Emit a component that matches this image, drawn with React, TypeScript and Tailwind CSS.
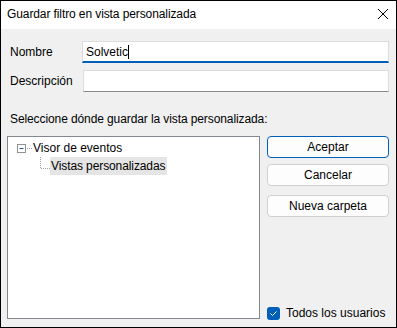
import React from 'react';

const font = { fontFamily: '"Segoe UI", "Liberation Sans", Arial, sans-serif' };

export default function App() {
  return (
    <div className="w-[397px] h-[328px] border border-black bg-[#f0f0f0] flex flex-col text-[12px] text-black" style={font}>
      {/* title bar */}
      <div className="h-[28px] bg-white flex items-center justify-between pl-[6px] pr-[6px] shrink-0">
        <span className="pb-[3px] tracking-[-0.1px]">Guardar filtro en vista personalizada</span>
        <svg width="12" height="12" viewBox="0 0 12 12" className="mr-[1px] mb-[3px]">
          <path d="M1 1 L11 11 M11 1 L1 11" stroke="#000" strokeWidth="1" />
        </svg>
      </div>

      <div className="flex-1 flex flex-col px-[6px] pt-[12px]">
        <div className="flex items-center h-[22px]">
          <span className="w-[75px] pl-[3px]">Nombre</span>
          <div className="flex-1 h-[22px] bg-white border border-[#dcdcdc] border-b-2 border-b-[#005fb8] flex items-center pl-[3px] mr-[1px]">
            Solvetic<span className="w-px h-[14px] bg-black" />
          </div>
        </div>
        <div className="flex items-center h-[22px] mt-[7px]">
          <span className="w-[76px] pl-[3px]">Descripción</span>
          <div className="flex-1 h-[22px] bg-white border border-[#dcdcdc] border-b-[#8a8a8a] mr-[1px]" />
        </div>

        <div className="mt-[18px] pl-[3px] tracking-[-0.1px]">Seleccione dónde guardar la vista personalizada:</div>

        <div className="flex gap-[7px] mt-[8px] pb-[8px] flex-1">
          <div className="w-[253px] bg-white border border-[#828790] pt-[2px] pl-[9px]">
            <div className="flex items-center h-[18px]">
              <svg width="16" height="9" viewBox="0 0 16 9" className="shrink-0">
                <rect x="0.5" y="0.5" width="8" height="8" fill="#fff" stroke="#919191" />
                <path d="M2.5 4.5 H6.5" stroke="#1f5aa5" />
                <path d="M10 4.5 H11 M12 4.5 H13 M14 4.5 H15" stroke="#a0a0a0" />
              </svg>
              <span>Visor de eventos</span>
            </div>
            <div className="flex items-center h-[18px]">
              <svg width="33" height="18" viewBox="0 0 33 18" className="shrink-0">
                <path d="M23.5 0 V1 M23.5 2 V3 M23.5 4 V5 M23.5 6 V7 M23.5 8 V9 M23.5 10 V11" stroke="#a0a0a0" />
                <path d="M24 11.5 H25 M26 11.5 H27 M28 11.5 H29 M30 11.5 H31 M32 11.5 H33" stroke="#a0a0a0" />
              </svg>
              <span className="bg-[#e5e5e5] pl-[1px] pr-[2px] h-[18px] flex items-center tracking-[-0.1px]">Vistas personalizadas</span>
            </div>
          </div>

          <div className="flex-1 flex flex-col mr-[1px]">
            <button className="h-[22px] rounded-[4px] border border-[#005fb8] bg-[#fdfdfd] flex items-center justify-center">Aceptar</button>
            <button className="h-[22px] mt-[6px] rounded-[4px] border border-[#d0d0d0] bg-[#fdfdfd] flex items-center justify-center">Cancelar</button>
            <button className="h-[22px] mt-[9px] rounded-[4px] border border-[#d0d0d0] bg-[#fdfdfd] flex items-center justify-center">Nueva carpeta</button>
            <div className="flex-1" />
            <label className="flex items-center gap-[6px] mb-[-3px]">
              <span className="w-[13px] h-[13px] rounded-[3px] bg-[#005fb8] flex items-center justify-center">
                <svg width="9" height="9" viewBox="0 0 9 9">
                  <path d="M1.5 4.5 L3.5 6.5 L7.5 2.5" stroke="#fff" fill="none" strokeWidth="1" />
                </svg>
              </span>
              <span>Todos los usuarios</span>
            </label>
          </div>
        </div>
      </div>
    </div>
  );
}
